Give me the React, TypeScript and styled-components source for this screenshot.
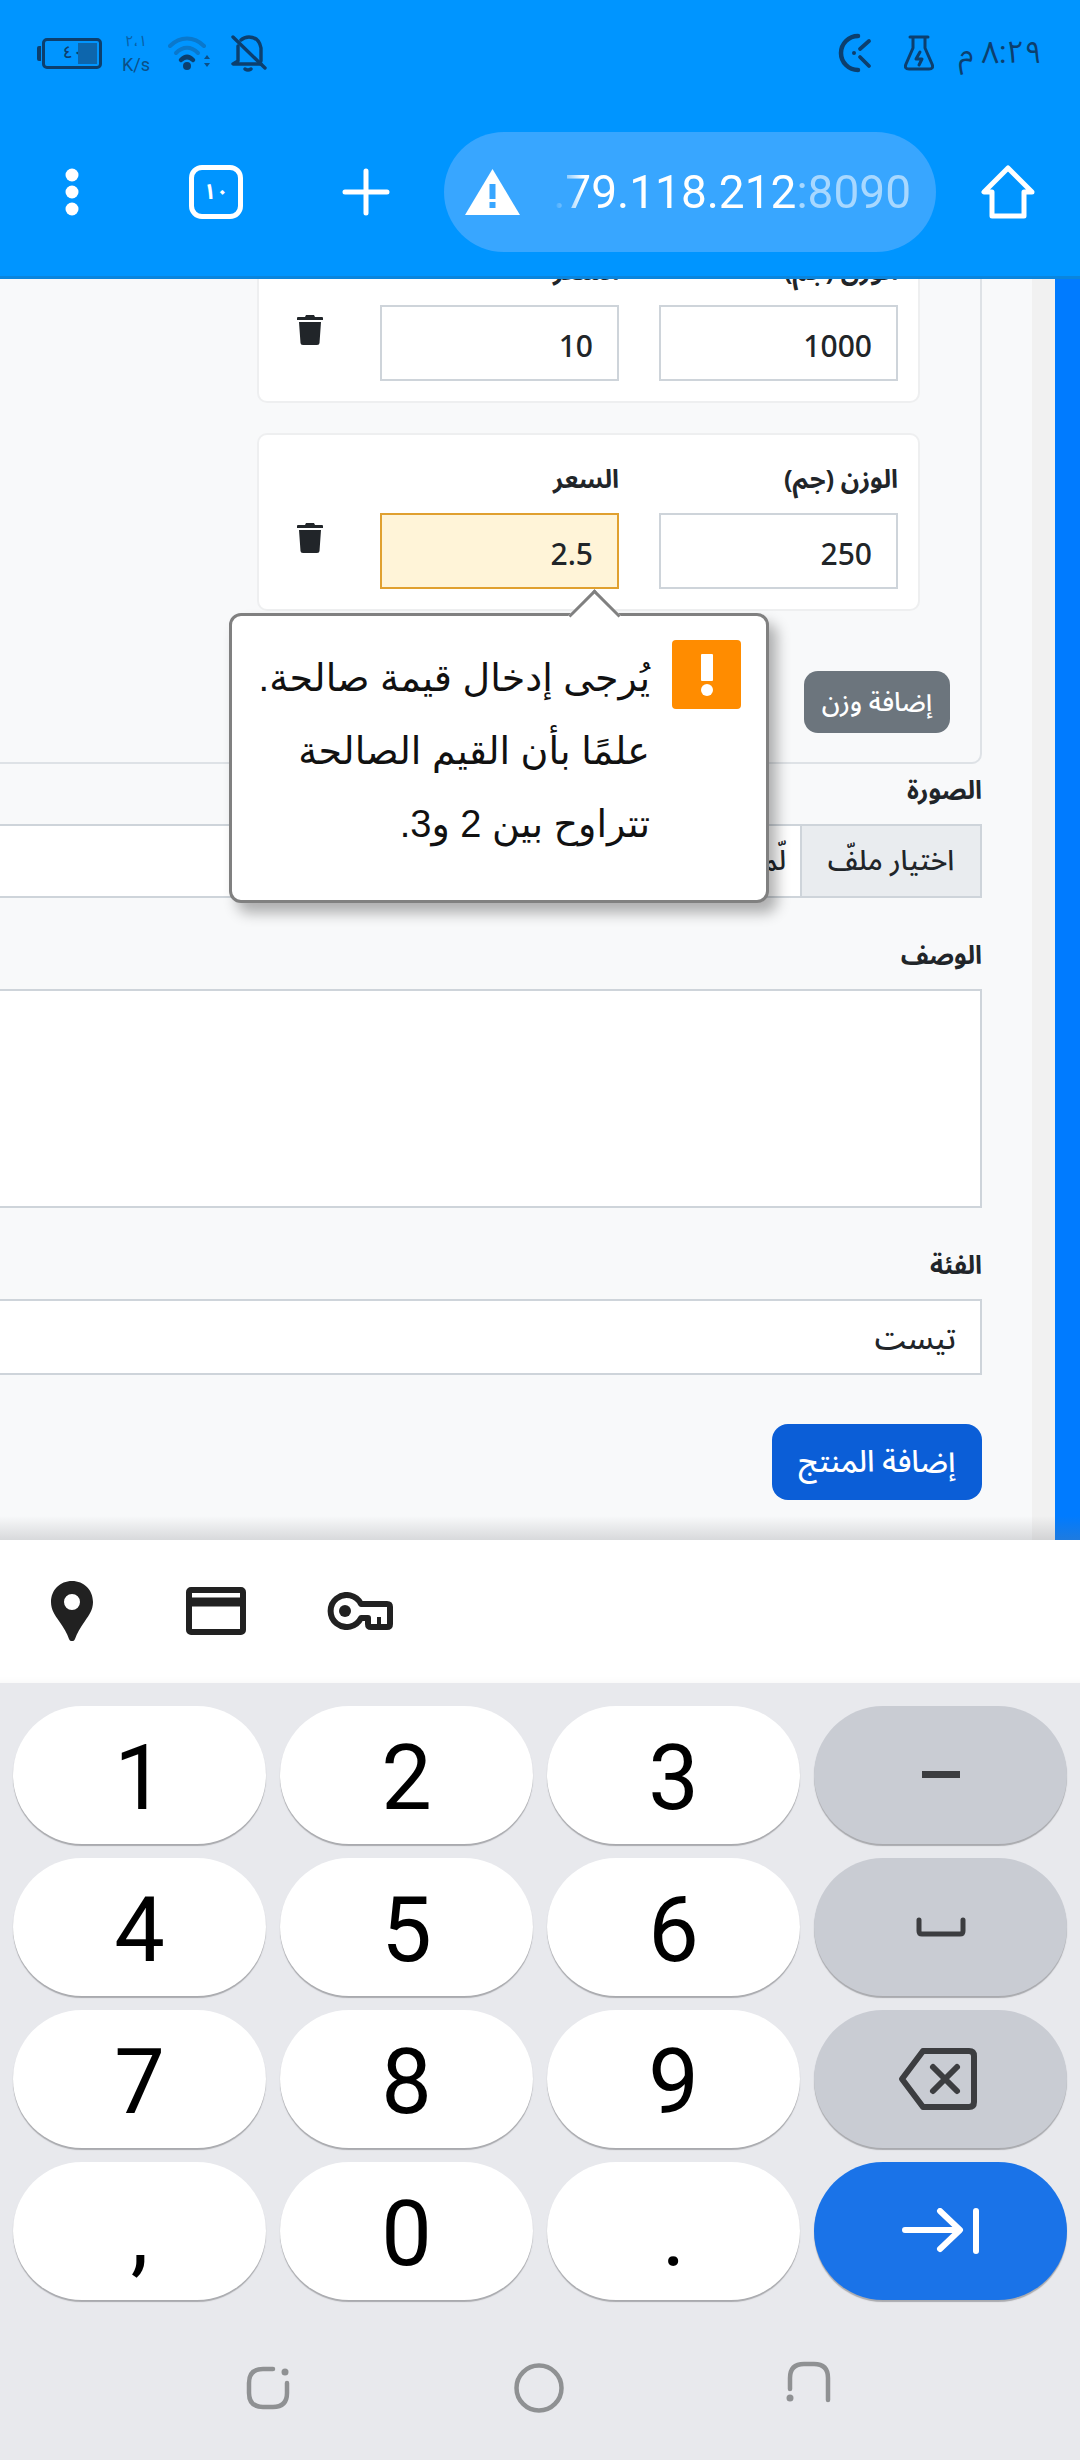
import { FC, ReactNode } from "react";
import styled, { createGlobalStyle } from "styled-components";

const ARABIC_STACK = `"Noto Sans", "Noto Sans Arabic", "DejaVu Sans", sans-serif`;

const GlobalStyle = createGlobalStyle`
  html, body {
    margin: 0;
    padding: 0;
    background: #e8e9ed;
  }
  * {
    box-sizing: border-box;
  }
`;

const Phone = styled.div`
  width: 1080px;
  height: 2460px;
  display: flex;
  flex-direction: column;
  overflow: hidden;
  font-family: Roboto, ${ARABIC_STACK};
  color: #212529;
`;

/* browser chrome */
const Chrome = styled.header`
  height: 279px;
  flex-shrink: 0;
  background: #0095ff;
  border-bottom: 3px solid #0a85dd;
  position: relative;
  z-index: 3;
`;

const StatusBar = styled.div`
  height: 132px;
  padding: 33px 38px 0;
  display: flex;
  justify-content: space-between;
  align-items: flex-start;
  color: #0c3f6e;
`;

const StatusGroup = styled.div`
  display: flex;
  align-items: center;
  height: 40px;
`;

const BatteryShell = styled.div`
  position: relative;
  width: 60px;
  height: 31px;
  margin-left: 4px;
  margin-right: 19px;
  border: 3px solid #0c3f6e;
  border-radius: 5px;
  display: flex;
  align-items: center;
  padding-left: 18px;
  font-size: 17px;
  font-weight: 500;
  &::before {
    content: "";
    position: absolute;
    left: -8px;
    top: 5px;
    width: 4px;
    height: 15px;
    border-radius: 2px 0 0 2px;
    background: #0c3f6e;
  }
  &::after {
    content: "";
    position: absolute;
    right: 2px;
    top: 2px;
    bottom: 2px;
    width: 19px;
    background: #0d66ad;
  }
`;

const NetSpeed = styled.div`
  width: 30px;
  margin-right: 17px;
  text-align: center;
  white-space: nowrap;
  color: #0c4f86;
`;

const NetValue = styled.div`
  font-size: 15px;
  line-height: 24px;
  color: #0a5fa5;
`;

const NetUnit = styled.div`
  font-size: 18px;
  line-height: 24px;
`;

const ClockText = styled.span`
  font-size: 31px;
  direction: rtl;
  margin-left: 25px;
  line-height: 40px;
  white-space: nowrap;
`;

const Toolbar = styled.div`
  height: 144px;
  display: flex;
  align-items: flex-start;
`;

const ToolbarSlot = styled.div<{ $width: number }>`
  width: ${(p) => p.$width}px;
  height: 120px;
  display: flex;
  align-items: center;
  justify-content: center;
  flex-shrink: 0;
`;

const TabCount = styled.div`
  width: 54px;
  height: 54px;
  border: 5px solid #fff;
  border-radius: 13px;
  display: flex;
  align-items: center;
  justify-content: center;
  color: #fff;
  font-size: 22px;
  font-weight: 700;
  line-height: 1;
`;

const UrlPill = styled.div`
  width: 492px;
  height: 120px;
  border-radius: 60px;
  background: #38a6ff;
  display: flex;
  align-items: center;
  padding: 0 25px 0 21px;
  flex-shrink: 0;
`;

const UrlClip = styled.div`
  flex: 1;
  min-width: 0;
  margin-left: 25px;
  overflow: hidden;
  display: flex;
  justify-content: flex-end;
  white-space: nowrap;
  font-size: 46px;
  color: #fff;
`;

const UrlText = styled.span`
  display: inline-block;
  -webkit-mask-image: linear-gradient(to right, transparent 0, #000 30px);
  mask-image: linear-gradient(to right, transparent 0, #000 30px);
`;

const UrlPort = styled.span`
  color: #a8d8ff;
`;

/* web page */
const Viewport = styled.main`
  height: 1261px;
  flex-shrink: 0;
  display: flex;
  position: relative;
  overflow: hidden;
  background: #f8f9fa;
  &::after {
    content: "";
    position: absolute;
    left: 0;
    right: 0;
    bottom: 0;
    height: 24px;
    background: linear-gradient(to bottom, rgba(120, 122, 128, 0), rgba(120, 122, 128, 0.25));
    pointer-events: none;
    z-index: 2;
  }
`;

const PageColumn = styled.div`
  width: 1032px;
  flex-shrink: 0;
  direction: rtl;
  padding-right: 50px;
  overflow: hidden;
  font-family: ${ARABIC_STACK};
`;

const Gutter = styled.div`
  width: 23px;
  background: #f1f1f1;
`;

const BlueEdge = styled.div`
  flex: 1;
  background: #007bff;
`;

const FormBody = styled.div`
  margin-left: -20px;
  margin-top: -82px;
`;

const WeightBox = styled.section`
  height: 567px;
  border: 2px solid #dee2e6;
  border-radius: 0 0 10px 10px;
  padding: 26px 30px 0 0;
`;

const WeightCard = styled.div<{ $first?: boolean }>`
  width: 663px;
  height: 178px;
  margin-top: ${(p) => (p.$first ? 0 : 30)}px;
  margin-right: 30px;
  background: #fff;
  border: 2px solid #eeeff0;
  border-radius: 10px;
  padding: 26px 20px 0;
  display: flex;
  gap: 40px;
`;

const SmallField = styled.div`
  width: 239px;
`;

const FieldLabel = styled.label`
  display: block;
  height: 35px;
  line-height: 35px;
  margin-bottom: 17px;
  font-size: 25.5px;
  font-weight: 700;
  color: #212529;
  white-space: nowrap;
`;

const InputAnchor = styled.div`
  position: relative;
`;

const TextInput = styled.div<{ $warn?: boolean; $height?: number }>`
  height: ${(p) => p.$height ?? 76}px;
  background: ${(p) => (p.$warn ? "#fff4d8" : "#fff")};
  border: 2px solid ${(p) => (p.$warn ? "#e0a030" : "#ced4da")};
  padding: 5px 24px 0;
  display: flex;
  align-items: center;
  font-size: 30px;
  font-weight: 500;
  color: #212529;
`;

const TrashButton = styled.button`
  width: 26px;
  height: 30px;
  margin: 62px 17px 0 0;
  padding: 0;
  border: 0;
  background: none;
  color: #212529;
`;

const AddWeightButton = styled.button`
  display: block;
  width: 146px;
  height: 62px;
  margin-top: 60px;
  border: 0;
  border-radius: 14px;
  background: #6c757d;
  color: #fff;
  font-family: inherit;
  font-size: 26px;
  font-weight: 500;
  padding: 0;
`;

const FormField = styled.div<{ $top?: number }>`
  margin-top: ${(p) => p.$top ?? 39}px;
`;

const FileInput = styled.div`
  height: 74px;
  background: #fff;
  border: 2px solid #ced4da;
  display: flex;
  align-items: stretch;
`;

const FileButton = styled.div`
  width: 180px;
  background: #e9ecef;
  border-left: 2px solid #ced4da;
  display: flex;
  align-items: center;
  justify-content: center;
  font-size: 28px;
  font-weight: 500;
`;

const FileName = styled.div`
  padding: 0 14px;
  display: flex;
  align-items: center;
  font-size: 28px;
  font-weight: 500;
  white-space: nowrap;
`;

const SubmitButton = styled.button`
  display: block;
  width: 210px;
  height: 76px;
  margin-top: 49px;
  border: 0;
  border-radius: 16px;
  background: #0b5ed7;
  color: #fff;
  font-family: inherit;
  font-size: 30px;
  font-weight: 500;
  padding: 0;
`;

/* validation bubble */
const Bubble = styled.div`
  position: absolute;
  top: 100px;
  left: -151px;
  width: 540px;
  height: 290px;
  background: #fff;
  border: 3px solid #808080;
  border-radius: 12px;
  box-shadow: 8px 10px 14px rgba(0, 0, 0, 0.3);
  padding: 24px 25px 0 0;
  display: flex;
  gap: 22px;
  z-index: 1;
  &::before {
    content: "";
    position: absolute;
    top: -19px;
    left: 344px;
    width: 34px;
    height: 34px;
    background: #fff;
    border-top: 3px solid #808080;
    border-left: 3px solid #808080;
    transform: rotate(45deg);
    transform-origin: center;
  }
`;

const BubbleIcon = styled.div`
  width: 69px;
  height: 69px;
  flex-shrink: 0;
  background: #ff8c00;
  border-radius: 4px;
  display: flex;
  align-items: center;
  justify-content: center;
`;

const BubbleText = styled.div`
  font-family: "Liberation Sans", "DejaVu Sans", sans-serif;
  font-size: 38px;
  line-height: 73px;
  color: #111;
  margin-top: 2px;
  white-space: nowrap;
`;

/* keyboard */
const AccessoryRow = styled.div`
  height: 143px;
  flex-shrink: 0;
  background: #fff;
  display: flex;
  align-items: center;
  box-shadow: inset 0 -8px 6px -6px rgba(0, 0, 0, 0.03);
`;

const AccessorySlot = styled.div<{ $width: number }>`
  width: ${(p) => p.$width}px;
  display: flex;
  justify-content: center;
  margin-top: -2px;
`;

const Keyboard = styled.section`
  flex: 1;
  background: #e8e9ed;
  padding: 23px 13px 0;
`;

const KeyGrid = styled.div`
  display: grid;
  grid-template-columns: repeat(4, 253px);
  grid-auto-rows: 138px;
  column-gap: 14px;
  row-gap: 14px;
`;

const Key = styled.button<{ $variant?: "digit" | "fn" | "go" }>`
  border: 0;
  padding: ${(p) => (p.$variant ? "0" : "7px 0 0")};
  border-radius: 69px;
  display: flex;
  align-items: center;
  justify-content: center;
  font-family: Roboto, sans-serif;
  font-size: 90px;
  line-height: 1;
  color: #000;
  background: ${(p) => (p.$variant === "fn" ? "#c9ccd3" : p.$variant === "go" ? "#1a73e8" : "#fff")};
  box-shadow: 0 2px 1px #a9aaae;
`;

const NavBar = styled.nav`
  height: 160px;
  display: flex;
  align-items: flex-start;
  padding: 63px 0 0 121px;
`;

const NavSlot = styled.div<{ $lift?: number }>`
  width: 270px;
  height: 50px;
  margin-top: ${(p) => -(p.$lift ?? 0)}px;
  display: flex;
  align-items: center;
  justify-content: center;
`;

const KEYS: { label?: ReactNode; variant?: "digit" | "fn" | "go" }[] = [
  { label: "1" },
  { label: "2" },
  { label: "3" },
  {
    variant: "fn",
    label: (
      <svg width="38" height="10" viewBox="0 0 38 10">
        <rect y="1" width="38" height="7" fill="#3c3d40" />
      </svg>
    ),
  },
  { label: "4" },
  { label: "5" },
  { label: "6" },
  {
    variant: "fn",
    label: (
      <svg width="50" height="20" viewBox="0 0 50 20" fill="none" stroke="#3c3d40" strokeWidth="5" strokeLinecap="round" strokeLinejoin="round">
        <path d="M3 3v11q0 3 3 3h38q3 0 3-3V3" />
      </svg>
    ),
  },
  { label: "7" },
  { label: "8" },
  { label: "9" },
  {
    variant: "fn",
    label: (
      <svg width="80" height="64" viewBox="0 0 80 64" fill="none" stroke="#3c3d40" strokeWidth="6" strokeLinecap="round" strokeLinejoin="round" style={{ marginLeft: -6 }}>
        <path d="M25 4h46q5 0 5 5v46q0 5-5 5H25L4 32z" />
        <path d="M35 20l24 24M59 20L35 44" />
      </svg>
    ),
  },
  { label: "," },
  { label: "0" },
  { label: "." },
  {
    variant: "go",
    label: (
      <svg width="78" height="46" viewBox="0 0 78 46" fill="none" stroke="#fff" strokeWidth="6" strokeLinecap="round" strokeLinejoin="round">
        <path d="M3 22h54M38 3l20 19-20 19" />
        <path d="M74 3v40" />
      </svg>
    ),
  },
];

const TrashIcon: FC = () => (
  <svg width="26" height="30" viewBox="0 0 26 30" fill="currentColor">
    <path d="M9 0h8l1 2h7q1 0 1 1v2H0V3q0-1 1-1h7zM2 7h22l-1.500 21q0 2-2.500 2H6q-2.500 0-2.500-2z" />
  </svg>
);

const App: FC = () => (
  <>
    <GlobalStyle />
    <Phone>
      <Chrome>
        <StatusBar>
          <StatusGroup>
            <BatteryShell>٤٠</BatteryShell>
            <NetSpeed>
              <NetValue>٢،١</NetValue>
              <NetUnit>K/s</NetUnit>
            </NetSpeed>
            <svg width="44" height="36" viewBox="0 0 44 36" fill="none" strokeLinecap="round">
              <path d="M2 11C12 1 26 1 36 11" stroke="#0a78cc" strokeWidth="4" />
              <path d="M8 18C15 11 23 11 30 18" stroke="#0a78cc" strokeWidth="4" />
              <path d="M13 25C17 21 21 21 25 25" stroke="#0c3f6e" strokeWidth="4.500" />
              <circle cx="19" cy="31" r="4" fill="#0c3f6e" />
              <path d="M39 20l3 4h-6zM39 32l3-4h-6z" fill="#0c4f86" />
            </svg>
            <svg width="36" height="38" viewBox="0 0 36 38" fill="none" stroke="#0c3f6e" strokeWidth="3.400" strokeLinecap="round" strokeLinejoin="round" style={{ marginLeft: 19 }}>
              <path d="M7 12V27L2 30h28" />
              <path d="M10 6q3-3 8-3 10 0 12 11v13" />
              <path d="M2 3l32 31" />
              <path d="M14 35q3 2 6 0" />
            </svg>
          </StatusGroup>
          <StatusGroup>
            <svg width="38" height="40" viewBox="0 0 38 40" fill="none" stroke="#0c3f6e" strokeLinecap="round">
              <path d="M24 3A17 17 0 1 0 24 37" strokeWidth="4.500" />
              <path d="M35 8l-9 8M26 24l9 9" strokeWidth="3.800" />
              <circle cx="20" cy="20" r="2" fill="#0c3f6e" stroke="none" />
            </svg>
            <svg width="30" height="36" viewBox="0 0 30 36" fill="none" stroke="#0c3f6e" strokeWidth="3" strokeLinecap="round" strokeLinejoin="round" style={{ marginLeft: 32 }}>
              <path d="M6 2h18M9 2v11L2 29q-2 5 3 5h20q5 0 3-5l-7-16V2" />
              <path d="M16 17l-4 7h6l-3 6" />
            </svg>
            <ClockText>٨:٢٩ م</ClockText>
          </StatusGroup>
        </StatusBar>
        <Toolbar>
          <ToolbarSlot $width={144}>
            <svg width="16" height="48" viewBox="0 0 16 48" fill="#fff">
              <circle cx="8" cy="7" r="6.500" />
              <circle cx="8" cy="24" r="6.500" />
              <circle cx="8" cy="41" r="6.500" />
            </svg>
          </ToolbarSlot>
          <ToolbarSlot $width={144}>
            <TabCount>١٠</TabCount>
          </ToolbarSlot>
          <ToolbarSlot $width={156}>
            <svg width="48" height="48" viewBox="0 0 48 48" stroke="#fff" strokeWidth="5" strokeLinecap="round">
              <path d="M24 3v42M3 24h42" />
            </svg>
          </ToolbarSlot>
          <UrlPill>
            <svg width="55" height="46" viewBox="0 0 55 46">
              <path d="M27.500 0L55 46H0z" fill="#fff" />
              <rect x="24.500" y="15" width="6" height="15" fill="#38a6ff" />
              <rect x="24.500" y="33" width="6" height="6" fill="#38a6ff" />
            </svg>
            <UrlClip>
              <UrlText dir="ltr">
                .79.118.212<UrlPort>:8090</UrlPort>
              </UrlText>
            </UrlClip>
          </UrlPill>
          <ToolbarSlot $width={144}>
            <svg width="54" height="54" viewBox="0 0 54 54" fill="none" stroke="#fff" strokeWidth="5" strokeLinejoin="round">
              <path d="M27 3L3 27h8v24h32V27h8z" />
            </svg>
          </ToolbarSlot>
        </Toolbar>
      </Chrome>

      <Viewport>
        <PageColumn>
          <FormBody>
            <WeightBox>
              <WeightCard $first>
                <SmallField>
                  <FieldLabel>الوزن (جم)</FieldLabel>
                  <TextInput>1000</TextInput>
                </SmallField>
                <SmallField>
                  <FieldLabel>السعر</FieldLabel>
                  <TextInput>10</TextInput>
                </SmallField>
                <TrashButton>
                  <TrashIcon />
                </TrashButton>
              </WeightCard>
              <WeightCard>
                <SmallField>
                  <FieldLabel>الوزن (جم)</FieldLabel>
                  <TextInput>250</TextInput>
                </SmallField>
                <SmallField>
                  <FieldLabel>السعر</FieldLabel>
                  <InputAnchor>
                    <TextInput $warn>2.5</TextInput>
                    <Bubble>
                      <BubbleIcon>
                        <svg width="14" height="42" viewBox="0 0 14 42" fill="#fff">
                          <rect x="1" y="0" width="12" height="27" rx="1" />
                          <circle cx="7" cy="36" r="6" />
                        </svg>
                      </BubbleIcon>
                      <BubbleText>
                        يُرجى إدخال قيمة صالحة.
                        <br />
                        علمًا بأن القيم الصالحة
                        <br />
                        تتراوح بين 2 و3.
                      </BubbleText>
                    </Bubble>
                  </InputAnchor>
                </SmallField>
                <TrashButton>
                  <TrashIcon />
                </TrashButton>
              </WeightCard>
              <AddWeightButton>إضافة وزن</AddWeightButton>
            </WeightBox>

            <FormField $top={8}>
              <FieldLabel>الصورة</FieldLabel>
              <FileInput>
                <FileButton>اختيار ملفّ</FileButton>
                <FileName>لّم يتم اختيار ملف</FileName>
              </FileInput>
            </FormField>
            <FormField>
              <FieldLabel>الوصف</FieldLabel>
              <TextInput $height={219} />
            </FormField>
            <FormField>
              <FieldLabel>الفئة</FieldLabel>
              <TextInput>تيست</TextInput>
            </FormField>
            <SubmitButton>إضافة المنتج</SubmitButton>
          </FormBody>
        </PageColumn>
        <Gutter />
        <BlueEdge />
      </Viewport>

      <AccessoryRow>
        <AccessorySlot $width={144}>
          <svg width="42" height="60" viewBox="0 0 42 60">
            <path
              fillRule="evenodd"
              fill="#212121"
              d="M21 0C9 0 0 9 0 21c0 8 4 13 8 19 5 7 8 12 10 18 1 3 5 3 6 0 2-6 5-11 10-18 4-6 8-11 8-19C42 9 33 0 21 0zm0 13a8 8 0 1 1 0 16 8 8 0 0 1 0-16z"
            />
          </svg>
        </AccessorySlot>
        <AccessorySlot $width={143}>
          <svg width="60" height="48" viewBox="0 0 60 48" fill="none" stroke="#212121" strokeWidth="6" strokeLinejoin="round">
            <rect x="3" y="3" width="54" height="42" rx="2" />
            <path d="M3 15h54" strokeWidth="9" />
          </svg>
        </AccessorySlot>
        <AccessorySlot $width={145}>
          <svg width="66" height="38" viewBox="0 0 66 38" fill="none" stroke="#212121" strokeWidth="6" strokeLinejoin="round">
            <path d="M34 12h26q3 0 3 3v17q0 3-3 3H44q-3 0-3-3v-6h-7a16 16 0 1 1 0-14z" />
            <circle cx="18" cy="19" r="6" fill="#212121" stroke="none" />
            <path d="M52 25v8" strokeWidth="4" />
          </svg>
        </AccessorySlot>
      </AccessoryRow>

      <Keyboard>
        <KeyGrid>
          {KEYS.map((key, index) => (
            <Key key={index} $variant={key.variant}>
              {key.label}
            </Key>
          ))}
        </KeyGrid>
        <NavBar>
          <NavSlot>
            <svg width="46" height="44" viewBox="0 0 46 44" fill="none" stroke="#8f9193" strokeWidth="4.500" strokeLinecap="round">
              <path d="M27 3H17Q3 3 3 17v10q0 14 14 14h10q14 0 14-14V17" />
              <circle cx="39" cy="6" r="3.500" fill="#8f9193" stroke="none" />
            </svg>
          </NavSlot>
          <NavSlot>
            <svg width="50" height="50" viewBox="0 0 50 50" fill="none" stroke="#8f9193" strokeWidth="4.500">
              <circle cx="25" cy="25" r="22.500" />
            </svg>
          </NavSlot>
          <NavSlot $lift={6}>
            <svg width="46" height="42" viewBox="0 0 46 42" fill="none" stroke="#8f9193" strokeWidth="4.500" strokeLinecap="round">
              <path d="M4 28V17Q4 3 18 3h10q14 0 14 14v22" />
              <circle cx="4" cy="37" r="3.500" fill="#8f9193" stroke="none" />
            </svg>
          </NavSlot>
        </NavBar>
      </Keyboard>
    </Phone>
  </>
);

export default App;
